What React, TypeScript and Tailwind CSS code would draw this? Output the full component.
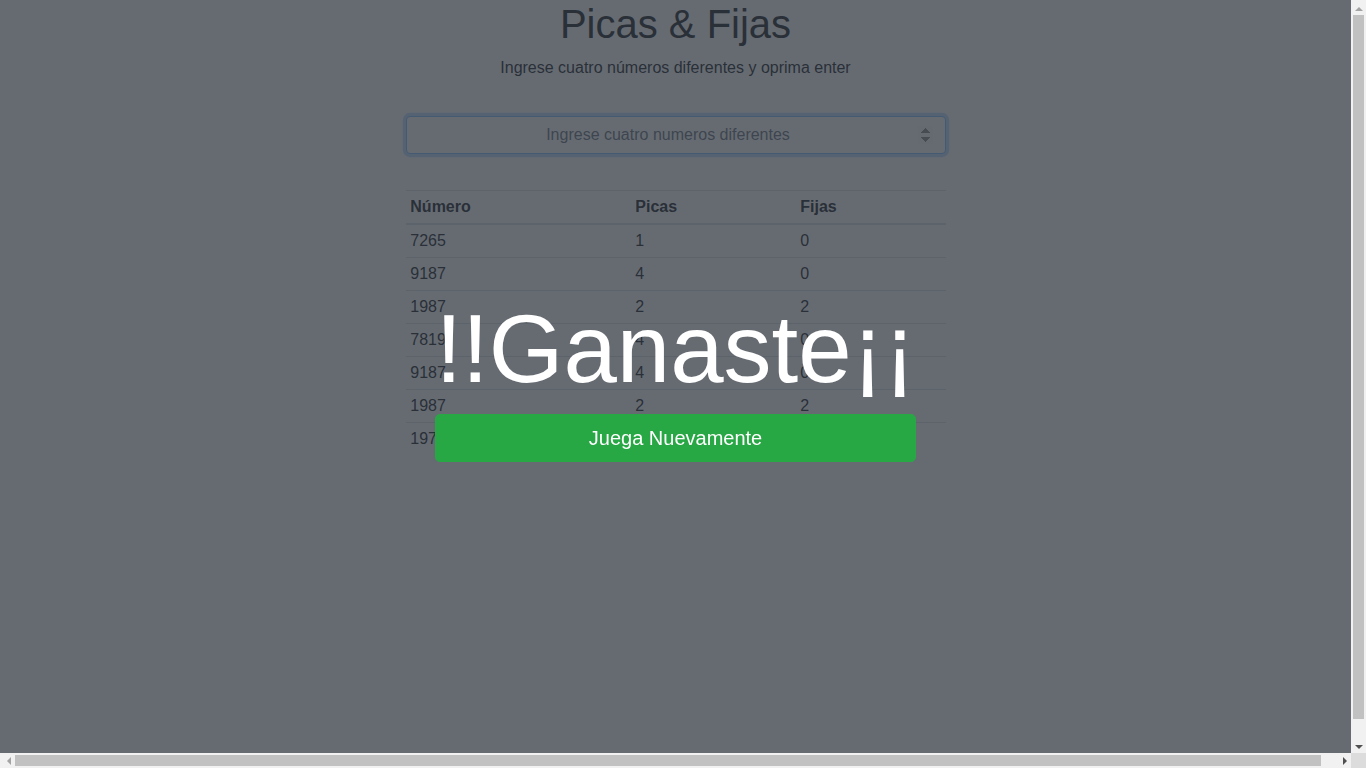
import { useState } from 'react'

type Guess = { numero: string; picas: number; fijas: number }

const guesses: Guess[] = [
  { numero: '7265', picas: 1, fijas: 0 },
  { numero: '9187', picas: 4, fijas: 0 },
  { numero: '1987', picas: 2, fijas: 2 },
  { numero: '7819', picas: 4, fijas: 0 },
  { numero: '9187', picas: 4, fijas: 0 },
  { numero: '1987', picas: 2, fijas: 2 },
  { numero: '1978', picas: 0, fijas: 4 },
]

// small triangle for the scrollbar buttons
function Arrow({ dir, dim }: { dir: 'up' | 'down' | 'left' | 'right'; dim?: boolean }) {
  const pts = {
    up: '0,7 4,3 8,7',
    down: '0,3 4,7 8,3',
    left: '7,0 3,4 7,8',
    right: '3,0 7,4 3,8',
  }[dir]
  return (
    <svg width="10" height="10" viewBox="-1 -1 10 10">
      <polygon points={pts} fill={dim ? '#a3a3a3' : '#505050'} />
    </svg>
  )
}

export default function App() {
  const [value, setValue] = useState('')
  const won = true

  return (
    <div className="h-screen w-full flex flex-col overflow-hidden font-['Liberation_Sans',Arial,sans-serif] text-[#212529] bg-white">
      <div className="flex flex-1 min-h-0">
        <div className="relative flex-1 min-w-0 overflow-hidden">
          <div className="w-[540px] mx-auto text-center">
            <h1 className="text-[40px] leading-[1.2] font-normal mb-2">Picas &amp; Fijas</h1>
            <p className="text-base leading-6 mb-[36px]">Ingrese cuatro números diferentes y oprima enter</p>

            <input
              type="number"
              autoFocus
              value={value}
              onChange={e => setValue(e.target.value)}
              placeholder="Ingrese cuatro numeros diferentes"
              className="block w-full h-[38px] px-3 text-base text-center text-[#495057] bg-white border border-[#80bdff] rounded-[0.25rem] shadow-[0_0_0_0.2rem_rgba(0,123,255,0.25)] outline-none placeholder:text-[#6c757d]"
            />

            <table className="mt-[36px] w-full border-collapse text-left text-base leading-6">
              <thead>
                <tr>
                  <th className="w-[225px] px-[0.3rem] py-1 font-bold border-t border-b-2 border-[#dee2e6]">Número</th>
                  <th className="w-[165px] px-[0.3rem] py-1 font-bold border-t border-b-2 border-[#dee2e6]">Picas</th>
                  <th className="w-[150px] px-[0.3rem] py-1 font-bold border-t border-b-2 border-[#dee2e6]">Fijas</th>
                </tr>
              </thead>
              <tbody>
                {guesses.map((g, i) => (
                  <tr key={i}>
                    <td className="px-[0.3rem] py-1 border-t border-[#dee2e6]">{g.numero}</td>
                    <td className="px-[0.3rem] py-1 border-t border-[#dee2e6]">{g.picas}</td>
                    <td className="px-[0.3rem] py-1 border-t border-[#dee2e6]">{g.fijas}</td>
                  </tr>
                ))}
              </tbody>
            </table>
          </div>

          {won && (
            <div className="absolute inset-0 bg-[rgba(45,52,62,0.73)] flex justify-center pt-[291px]">
              <div className="inline-block text-center h-fit">
                <h1 className="text-[96px] leading-[1.2] font-light text-white whitespace-nowrap mb-2">!!Ganaste¡¡</h1>
                <button
                  onClick={() => window.location.reload()}
                  className="block w-full h-12 px-4 text-[20px] leading-[1.5] text-white bg-[#28a745] border border-[#28a745] rounded-[0.3rem]"
                >
                  Juega Nuevamente
                </button>
              </div>
            </div>
          )}
        </div>

        {/* vertical scrollbar */}
        <div className="w-[15px] bg-[#f1f1f1] flex flex-col items-center">
          <div className="h-[15px] flex items-center justify-center"><Arrow dir="up" dim /></div>
          <div className="flex-1 w-full px-[2px] pb-[19px]">
            <div className="h-full w-full bg-[#c1c1c1]" />
          </div>
          <div className="h-[15px] flex items-center justify-center"><Arrow dir="down" /></div>
        </div>
      </div>

      {/* horizontal scrollbar */}
      <div className="h-[15px] flex">
        <div className="flex-1 bg-[#f1f1f1] flex items-center">
          <div className="w-[15px] flex items-center justify-center"><Arrow dir="left" dim /></div>
          <div className="flex-1 h-full py-[2px] pr-[15px]">
            <div className="h-full w-full bg-[#c1c1c1]" />
          </div>
          <div className="w-[15px] flex items-center justify-center"><Arrow dir="right" /></div>
        </div>
        <div className="w-[15px] bg-[#dcdcdc]" />
      </div>
    </div>
  )
}
